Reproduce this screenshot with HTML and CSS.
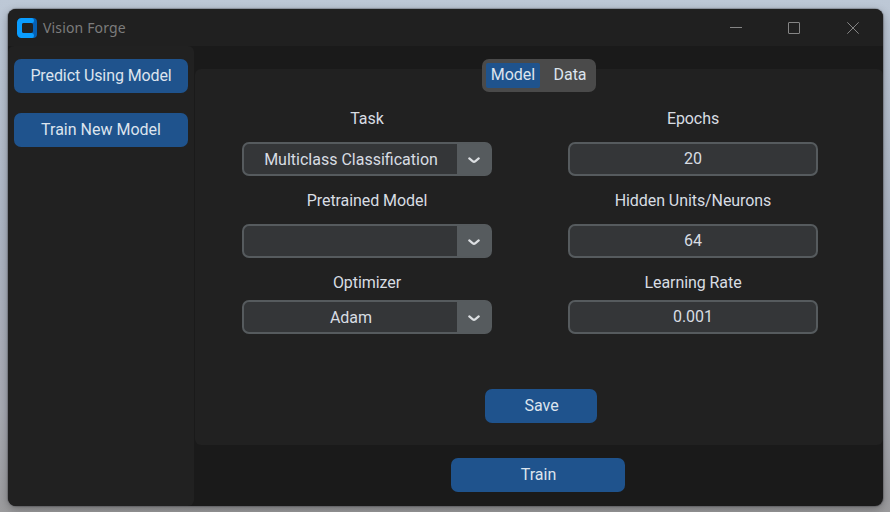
FILE: index.html
```html
<!DOCTYPE html>
<html lang="en">
<head>
<meta charset="utf-8">
<title>Vision Forge</title>
<link rel="stylesheet" href="styles.css">
</head>
<body>
<div class="window">
  <header class="titlebar">
    <svg class="logo" width="20" height="20" viewBox="0 0 20 20"><path d="M13 0h3a4 4 0 0 1 4 4v12a4 4 0 0 1-4 4h-3z" fill="#0560b5"/><path d="M4.500 0H15q2 0 2 2.500t-2 2.500H7q-2 0-2 2v6q0 2 2 2h8q2 0 2 2.500t-2 2.500H4.500A4.500 4.500 0 0 1 0 15.500v-11A4.500 4.500 0 0 1 4.500 0z" fill="#0a9dff"/><rect x="5" y="5" width="11" height="10" rx="2" fill="#212121"/></svg>
    <span class="title">Vision Forge</span>
    <div class="controls">
      <svg width="12" height="12" viewBox="0 0 12 12"><path d="M0 5.500h12"/></svg>
      <svg width="12" height="12" viewBox="0 0 12 12"><rect x=".5" y=".5" width="11" height="11" rx=".5"/></svg>
      <svg width="12" height="12" viewBox="0 0 12 12"><path d="M.3.300l11.400 11.400M11.700.300L.3 11.700"/></svg>
    </div>
  </header>
  <div class="body">
    <nav class="sidebar">
      <button class="btn">Predict Using Model</button>
      <button class="btn">Train New Model</button>
    </nav>
    <main class="main">
      <section class="panel">
        <div class="tabs"><button class="tab active">Model</button><button class="tab">Data</button></div>
        <div class="form">
          <div class="column">
            <label class="label">Task</label>
            <div class="combo"><span class="value">Multiclass Classification</span><span class="arrow"><svg width="12" height="7" viewBox="0 0 12 7"><path d="M1.300 1.400L4.800 4.300Q6 5.200 7.200 4.300L10.700 1.400"/></svg></span></div>
            <label class="label">Pretrained Model</label>
            <div class="combo"><span class="value"></span><span class="arrow"><svg width="12" height="7" viewBox="0 0 12 7"><path d="M1.300 1.400L4.800 4.300Q6 5.200 7.200 4.300L10.700 1.400"/></svg></span></div>
            <label class="label">Optimizer</label>
            <div class="combo last"><span class="value">Adam</span><span class="arrow"><svg width="12" height="7" viewBox="0 0 12 7"><path d="M1.300 1.400L4.800 4.300Q6 5.200 7.200 4.300L10.700 1.400"/></svg></span></div>
          </div>
          <div class="column">
            <label class="label">Epochs</label>
            <div class="entry">20</div>
            <label class="label">Hidden Units/Neurons</label>
            <div class="entry">64</div>
            <label class="label">Learning Rate</label>
            <div class="entry last">0.001</div>
          </div>
        </div>
        <button class="btn save">Save</button>
      </section>
      <button class="btn train">Train</button>
    </main>
  </div>
</div>
</body>
</html>
```
FILE: styles.css
```css
* { box-sizing: border-box; }
body {
  margin: 0;
  height: 512px;
  padding: 9px 7px 6px 8px;
  overflow: hidden;
  background: linear-gradient(#bdc8d6, #adb5c3 45%, #a7aab3 80%, #9b9b9d);
  font: 16px/20px Roboto, sans-serif;
  color: #d8dde3;
}
.window {
  height: 497px;
  display: flex;
  flex-direction: column;
  overflow: hidden;
  border-radius: 8px;
  background: #1a1a1a;
  box-shadow: 0 0 1px 1px rgba(60, 60, 65, .35), 0 3px 10px rgba(0, 0, 0, .3);
}
.titlebar {
  height: 37px;
  flex: none;
  display: flex;
  align-items: center;
  padding: 0 24px 0 9px;
  background: #202020;
}
.title {
  margin-left: 6px;
  font: 14px/20px "Noto Sans", sans-serif;
  letter-spacing: .15px;
  color: #7c7c7c;
}
.controls {
  display: flex;
  gap: 46px;
  margin-left: auto;
}
.controls svg { fill: none; stroke: #858585; stroke-width: 1; }
.controls svg:last-child { margin-left: 1px; }
.body { flex: 1; display: flex; }
.sidebar {
  width: 186px;
  padding: 13px 6px;
  display: flex;
  flex-direction: column;
  gap: 20px;
  border-radius: 6px;
  background: #212121;
}
.btn {
  height: 34px;
  padding: 0 0 1px;
  border: 0;
  border-radius: 7px;
  background: #1f538d;
  color: #dce4ee;
  font: inherit;
}
.sidebar .btn:first-child { letter-spacing: -.1px; }
.main {
  flex: 1;
  display: flex;
  flex-direction: column;
  align-items: center;
  padding: 23px 0 0 1px;
}
.panel {
  width: 100%;
  height: 376px;
  display: flex;
  flex-direction: column;
  align-items: center;
  border-radius: 6px;
  background: #212121;
}
.tabs {
  width: 114px;
  height: 33px;
  flex: none;
  display: flex;
  margin: -10px 0 0;
  padding: 4px;
  border-radius: 7px;
  background: #4a4a4a;
}
.tab {
  height: 25px;
  width: 54px;
  padding: 0 0 1px;
  border: 0;
  border-radius: 2px;
  background: none;
  color: #dce4ee;
  font: inherit;
}
.tab:last-child { width: 52px; padding-left: 8px; }
.tab.active { background: #1f538d; }
.form {
  display: flex;
  gap: 76px;
  margin: 14px 0 0 -18px;
}
.column { width: 250px; }
.label {
  display: block;
  height: 24px;
  margin-bottom: 12px;
  line-height: 26px;
  text-align: center;
  letter-spacing: -.07px;
}
.combo, .entry {
  height: 34px;
  margin-bottom: 12px;
  border: 2px solid #565b5e;
  border-radius: 7px;
  background: #343638;
}
.entry { line-height: 29px; text-align: center; }
.combo { display: flex; }
.combo.last, .entry.last { margin: -6px 0 0; }
.value { flex: 1; line-height: 31px; text-align: center; padding-left: 1px; }
.arrow {
  width: 33px;
  display: flex;
  align-items: center;
  justify-content: center;
  padding-top: 3px;
  background: #565b5e;
}
.arrow svg { fill: none; stroke: #dcdfe2; stroke-width: 2.2; stroke-linecap: round; }
.save { width: 112px; margin: 55px 0 0 3px; padding-left: 2px; }
.train { width: 174px; margin: 13px 0 0 -2px; padding-left: 1px; }
```
